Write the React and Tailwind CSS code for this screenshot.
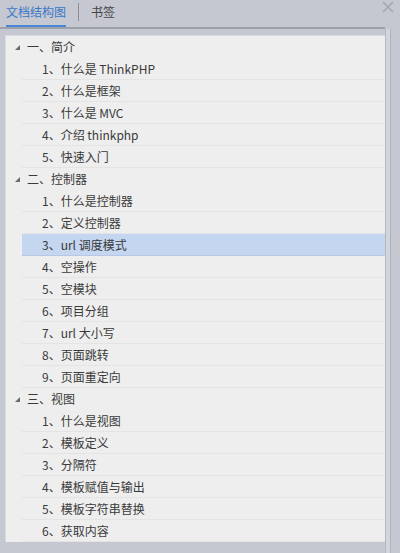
const TREE = [
  {
    title: '一、简介',
    items: ['1、什么是 ThinkPHP', '2、什么是框架', '3、什么是 MVC', '4、介绍 thinkphp', '5、快速入门'],
  },
  {
    title: '二、控制器',
    items: [
      '1、什么是控制器',
      '2、定义控制器',
      '3、url 调度模式',
      '4、空操作',
      '5、空模块',
      '6、项目分组',
      '7、url 大小写',
      '8、页面跳转',
      '9、页面重定向',
    ],
  },
  {
    title: '三、视图',
    items: ['1、什么是视图', '2、模板定义', '3、分隔符', '4、模板赋值与输出', '5、模板字符串替换', '6、获取内容'],
  },
]

const SELECTED = '3、url 调度模式'

function Caret() {
  return (
    <svg width="7" height="7" viewBox="0 0 7 7" className="shrink-0">
      <path d="M6 1 L6 6 L1 6 Z" fill="#6b6b6b" />
    </svg>
  )
}

function CloseIcon() {
  return (
    <svg width="12" height="12" viewBox="0 0 12 12">
      <path d="M1 1 L11 11 M11 1 L1 11" stroke="#a4a8b0" strokeWidth="1.6" />
    </svg>
  )
}

export default function App() {
  return (
    <div
      className="flex h-[553px] w-[400px] flex-col bg-[#c5c8d0] text-[12px] text-[#3a3a3a]"
      style={{ fontFamily: '"Noto Sans CJK SC", "Noto Sans", sans-serif' }}
    >
      <div className="relative mr-[15px] flex h-[29px] items-end border-b-2 border-[#9da1a9] pl-[6px]">
        <div className="border-b-2 border-[#4a86d4] pb-[4px] text-[#3a78c8]">文档结构图</div>
        <div className="mx-[12px] mb-[6px] h-[18px] w-px bg-[#8a8e96]" />
        <div className="pb-[6px] text-[#444]">书签</div>
        <div className="absolute right-[-9px] top-[1px]">
          <CloseIcon />
        </div>
      </div>
      <div className="flex flex-1">
        <div className="mt-[6px] mb-[11px] ml-[5px] flex-1 self-start border-l border-t border-[#d8dbe0] bg-[#eeeeee]">
          {TREE.map((sec) => (
            <div key={sec.title}>
              <div className="flex h-[22px] items-center gap-[6px] pl-[8px]">
                <Caret />
                <span>{sec.title}</span>
              </div>
              {sec.items.map((it) => (
                <div
                  key={it}
                  className={
                    it === SELECTED
                      ? 'ml-[16px] flex h-[22px] items-center border-b border-[#b8c8e4] bg-[#c5d6f1] pl-[20px]'
                      : 'ml-[16px] flex h-[22px] items-center border-b border-[#e4e4e4] pl-[20px]'
                  }
                >
                  {it}
                </div>
              ))}
            </div>
          ))}
        </div>
        <div className="flex w-[15px] border-l border-[#b4b8c0]">
          <div className="w-[4px] bg-[#d2d5db]" />
          <div className="w-px bg-[#aeb2ba]" />
          <div className="flex-1 bg-[#c5c8d0]" />
        </div>
      </div>
    </div>
  )
}
